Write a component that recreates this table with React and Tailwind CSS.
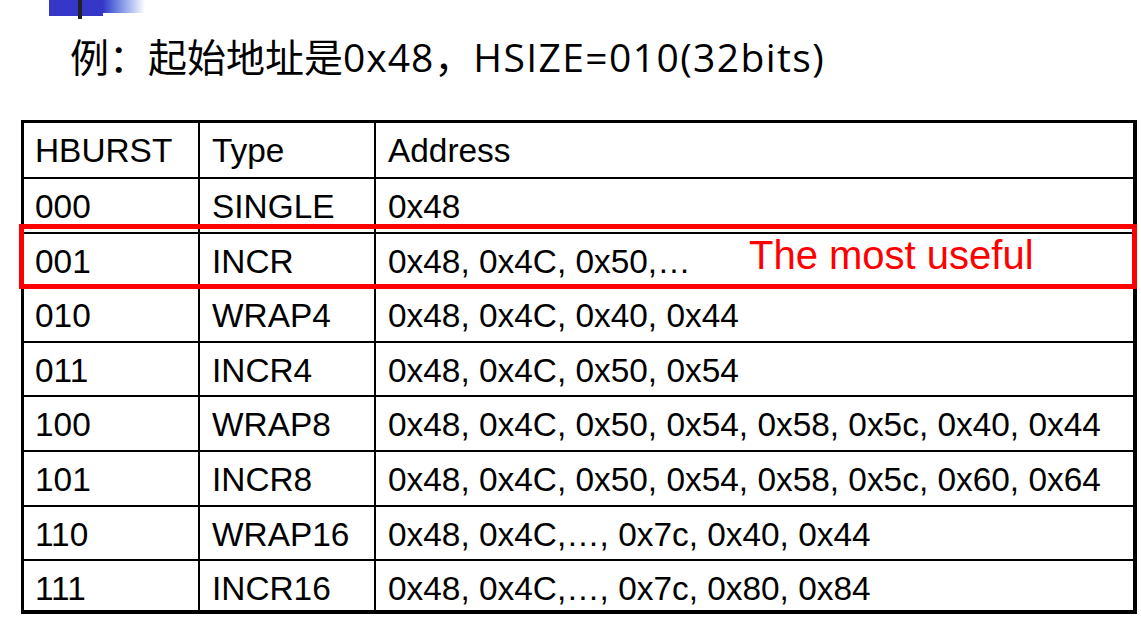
const rows = [
  ['000', 'SINGLE', '0x48'],
  ['001', 'INCR', '0x48, 0x4C, 0x50,…'],
  ['010', 'WRAP4', '0x48, 0x4C, 0x40, 0x44'],
  ['011', 'INCR4', '0x48, 0x4C, 0x50, 0x54'],
  ['100', 'WRAP8', '0x48, 0x4C, 0x50, 0x54, 0x58, 0x5c, 0x40, 0x44'],
  ['101', 'INCR8', '0x48, 0x4C, 0x50, 0x54, 0x58, 0x5c, 0x60, 0x64'],
  ['110', 'WRAP16', '0x48, 0x4C,…, 0x7c, 0x40, 0x44'],
  ['111', 'INCR16', '0x48, 0x4C,…, 0x7c, 0x80, 0x84'],
]

function Row({ cells, first, last }) {
  return (
    <div
      className={`grid grid-cols-[174px_176px_1fr] ${first ? 'h-[54px]' : last ? 'h-[51px] border-t-2 border-black' : 'h-[54.6px] border-t-2 border-black'}`}
    >
      <div className="flex items-center pl-[11px] pt-[3px]">{cells[0]}</div>
      <div className="flex items-center pl-[12px] pt-[3px] border-l-2 border-black">{cells[1]}</div>
      <div className="flex items-center pl-[12px] pt-[3px] border-l-2 border-black">{cells[2]}</div>
    </div>
  )
}

export default function App() {
  return (
    <div className="w-[1141px] h-[618px] bg-white overflow-hidden">
      <div className="flex items-start h-[19px] ml-[49px]">
        <div className="w-[29px] h-[16px] bg-[#3636c8]" />
        <div className="w-[4px] h-[19px] bg-[#222]" />
        <div className="w-[21px] h-[16px] bg-[#3636c8]" />
        <div className="w-[42px] h-[13px] bg-gradient-to-r from-[#3636c8] to-white" />
      </div>

      <h1
        className="ml-[70px] mt-[15px] h-[86px] text-[39px] leading-[46px] text-black whitespace-nowrap"
        style={{ fontFamily: '"Open Sans", "Noto Sans CJK SC", sans-serif' }}
      >
        例：起始地址是<span className="tracking-[1px]">0x48</span>，<span className="tracking-[1.4px]">HSIZE=010(32bits)</span>
      </h1>

      <div className="relative ml-[21px] w-[1116px]">
        <div
          className="border-[3px] border-b-[4px] border-r-[4px] border-black text-[33.4px] text-black"
          style={{ fontFamily: '"Liberation Sans", Arial, sans-serif' }}
        >
          <Row cells={['HBURST', 'Type', 'Address']} first />
          {rows.map((r, i) => (
            <Row key={r[0]} cells={r} last={i === rows.length - 1} />
          ))}
        </div>

        <div className="absolute left-[-2px] top-[104px] w-[1118px] h-[65px] border-[5px] border-[#ff0000] flex items-center pl-[725px] pb-[3px]">
          <span
            className="text-[40px] text-[#ff0000]"
            style={{ fontFamily: '"Liberation Sans", Arial, sans-serif' }}
          >
            The most useful
          </span>
        </div>
      </div>
    </div>
  )
}
